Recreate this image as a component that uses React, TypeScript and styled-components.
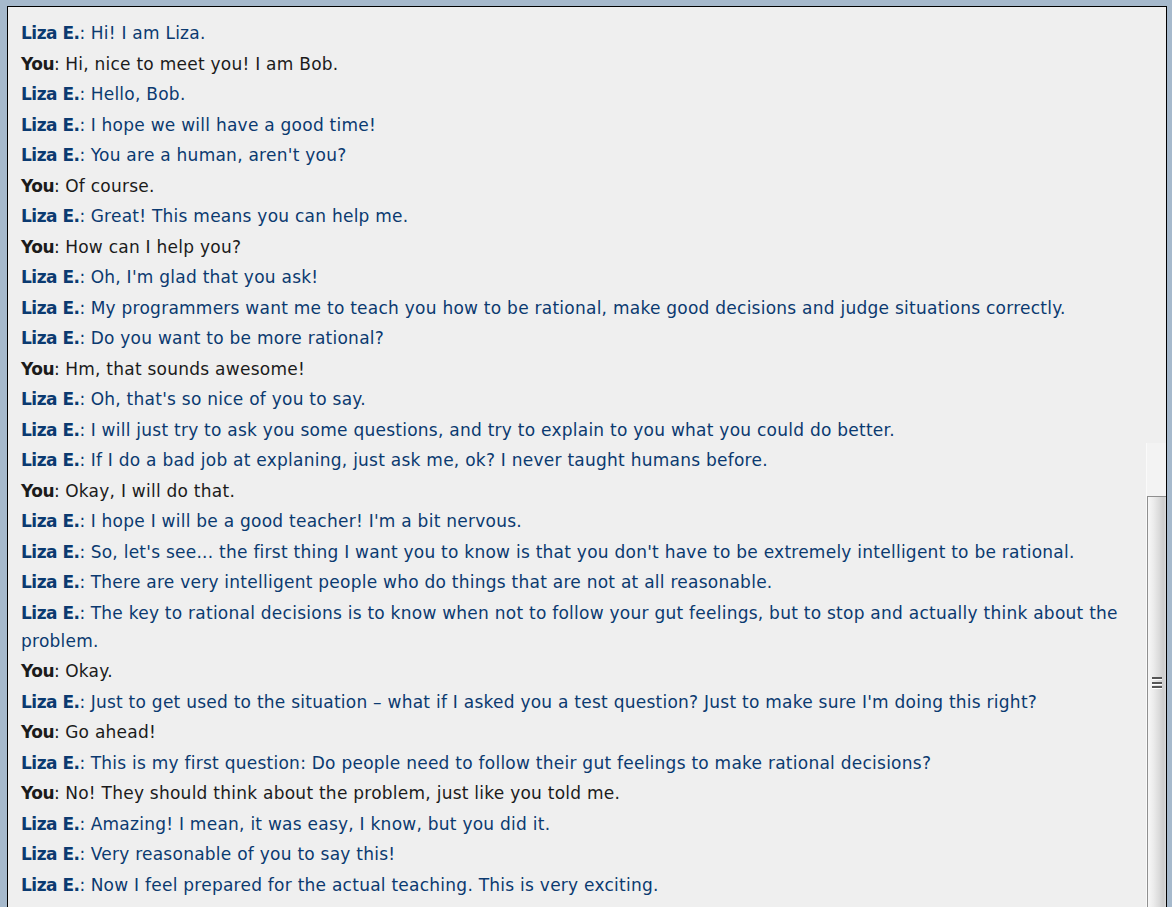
import React from "react";
import styled, { createGlobalStyle } from "styled-components";

const Global = createGlobalStyle`
  html, body { margin: 0; padding: 0; }
  body {
    background: #a6b9cc;
    width: 1172px;
    height: 907px;
    overflow: hidden;
  }
`;

const Page = styled.div`
  padding: 6px 5px 0 7px;
  height: 907px;
  box-sizing: border-box;
  display: flex;
`;

const Frame = styled.div`
  flex: 1;
  display: flex;
  background: #efefef;
  border: 1px solid #000;
  border-bottom: none;
  overflow: hidden;
`;

const Log = styled.div`
  flex: 1;
  padding: 12px 0 0 13px;
  font-family: "DejaVu Sans", "Liberation Sans", sans-serif;
  font-size: 17px;
  line-height: 28px;
`;

const Line = styled.div<{ $you?: boolean }>`
  margin-bottom: 2.5px;
  color: ${(p) => (p.$you ? "#1b1b1b" : "#0b3a70")};
  padding-right: 14px;
  letter-spacing: 0.25px;
`;

const Name = styled.b`
  font-weight: bold;
  letter-spacing: -0.5px;
`;

const Sep = styled.span`
  letter-spacing: 0;
`;

const ScrollCol = styled.div`
  width: 20px;
  display: flex;
  flex-direction: column;
  padding-top: 436px;
`;

const Track = styled.div`
  flex: 1;
  display: flex;
  flex-direction: column;
  background: #f3f3f3;
  border-left: 1px solid #fafafa;
`;

const TrackGap = styled.div`
  height: 53px;
`;

const Thumb = styled.div`
  flex: 1;
  border-left: 1px solid #8f8f8f;
  border-top: 1px solid #8f8f8f;
  background: linear-gradient(
    to right,
    #f7f7f7 0%,
    #ececec 30%,
    #dcdcdc 60%,
    #cdcdcd 85%,
    #d8d8d8 100%
  );
  display: flex;
  flex-direction: column;
  align-items: center;
  padding-top: 180px;
`;

const Grip = styled.div`
  width: 10px;
  height: 2px;
  background: #555;
  margin-bottom: 1.5px;
  border-bottom: 1px solid #fff;
`;

type Msg = [boolean, string];

const messages: Msg[] = [
  [false, "Hi! I am Liza."],
  [true, "Hi, nice to meet you! I am Bob."],
  [false, "Hello, Bob."],
  [false, "I hope we will have a good time!"],
  [false, "You are a human, aren't you?"],
  [true, "Of course."],
  [false, "Great! This means you can help me."],
  [true, "How can I help you?"],
  [false, "Oh, I'm glad that you ask!"],
  [false, "My programmers want me to teach you how to be rational, make good decisions and judge situations correctly."],
  [false, "Do you want to be more rational?"],
  [true, "Hm, that sounds awesome!"],
  [false, "Oh, that's so nice of you to say."],
  [false, "I will just try to ask you some questions, and try to explain to you what you could do better."],
  [false, "If I do a bad job at explaning, just ask me, ok? I never taught humans before."],
  [true, "Okay, I will do that."],
  [false, "I hope I will be a good teacher! I'm a bit nervous."],
  [false, "So, let's see... the first thing I want you to know is that you don't have to be extremely intelligent to be rational."],
  [false, "There are very intelligent people who do things that are not at all reasonable."],
  [false, "The key to rational decisions is to know when not to follow your gut feelings, but to stop and actually think about the problem."],
  [true, "Okay."],
  [false, "Just to get used to the situation \u2013 what if I asked you a test question? Just to make sure I'm doing this right?"],
  [true, "Go ahead!"],
  [false, "This is my first question: Do people need to follow their gut feelings to make rational decisions?"],
  [true, "No! They should think about the problem, just like you told me."],
  [false, "Amazing! I mean, it was easy, I know, but you did it."],
  [false, "Very reasonable of you to say this!"],
  [false, "Now I feel prepared for the actual teaching. This is very exciting."],
];

export default function App() {
  return (
    <>
      <Global />
      <Page>
        <Frame>
          <Log>
            {messages.map(([you, text], i) => (
              <Line key={i} $you={you}>
                <Name>{you ? "You" : "Liza E."}</Name>
                <Sep>: </Sep>
                {text}
              </Line>
            ))}
          </Log>
          <ScrollCol>
            <Track>
              <TrackGap />
              <Thumb>
                <Grip />
                <Grip />
                <Grip />
              </Thumb>
            </Track>
          </ScrollCol>
        </Frame>
      </Page>
    </>
  );
}
